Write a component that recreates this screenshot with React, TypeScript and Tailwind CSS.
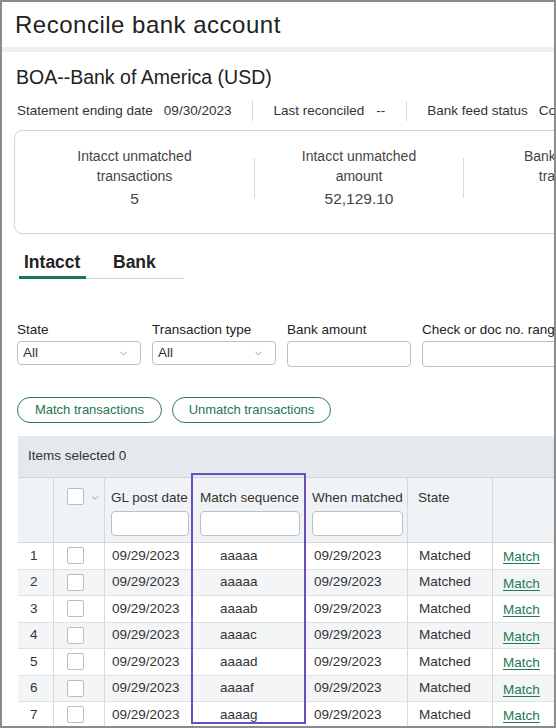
import React from "react";
import { ChevronDown } from "lucide-react";

const rows = [
  { n: 1, seq: "aaaaa" },
  { n: 2, seq: "aaaaa" },
  { n: 3, seq: "aaaab" },
  { n: 4, seq: "aaaac" },
  { n: 5, seq: "aaaad" },
  { n: 6, seq: "aaaaf" },
  { n: 7, seq: "aaaag" },
];

function Checkbox() {
  return <div className="w-[17px] h-[17px] bg-white border border-[#b7bec4] rounded-[2px] shrink-0" />;
}

function SelectBox({ label }: { label: string }) {
  return (
    <div className="w-[124px] h-[24px] border border-[#b9c1c6] rounded-[4px] bg-white flex items-center justify-between pl-[5px] pr-[11px]">
      <span>{label}</span>
      <ChevronDown size={11} strokeWidth={1.5} className="text-[#777]" />
    </div>
  );
}

export default function App() {
  return (
    <div className="w-[556px] h-[728px] border-2 border-[#8b8b8b] overflow-hidden bg-white text-[#333] font-['Liberation_Sans',Arial,sans-serif]">
      {/* page header */}
      <div className="h-[45px] flex items-center pl-[13px]">
        <h1 className="text-[24px] tracking-[0.5px] text-[#222] whitespace-nowrap">Reconcile bank account</h1>
      </div>
      <div className="h-[5px] bg-[#eaeff1]" />

      <div className="pl-[15px] pt-[13px] overflow-hidden">
        <div className="-ml-px text-[19.5px] leading-[24px] text-[#222] whitespace-nowrap">BOA--Bank of America (USD)</div>

        {/* statement info */}
        <div className="mt-[12px] h-[20px] flex items-center text-[13.5px] whitespace-nowrap">
          <span className="shrink-0">Statement ending date</span>
          <span className="shrink-0 ml-[11px]">09/30/2023</span>
          <div className="shrink-0 ml-[21px] w-px h-[20px] bg-[#d3d9dc]" />
          <span className="shrink-0 ml-[20px]">Last reconciled</span>
          <span className="shrink-0 ml-[12px]">--</span>
          <div className="shrink-0 ml-[21px] w-px h-[20px] bg-[#d3d9dc]" />
          <span className="shrink-0 ml-[20px]">Bank feed status</span>
          <span className="shrink-0 ml-[11px]">Connected</span>
        </div>

        {/* summary card */}
        <div className="-ml-[3px] mt-[9px] w-[700px] h-[104px] border border-[#cfd6da] rounded-[8px] flex text-[14px] text-[#444]">
          <div className="w-[239px] shrink-0 pt-[15px] text-center">
            <div className="leading-[20px]">Intacct unmatched<br />transactions</div>
            <div className="mt-[3px] leading-[20px] text-[15.5px]">5</div>
          </div>
          <div className="shrink-0 w-px h-[40px] mt-[27px] bg-[#d3d9dc]" />
          <div className="w-[208px] shrink-0 pt-[15px] text-center">
            <div className="leading-[20px]">Intacct unmatched<br />amount</div>
            <div className="mt-[3px] leading-[20px] text-[15.5px]">52,129.10</div>
          </div>
          <div className="shrink-0 w-px h-[40px] mt-[27px] bg-[#d3d9dc]" />
          <div className="w-[225px] shrink-0 pt-[15px] text-center">
            <div className="leading-[20px]">Bank unmatched<br />transactions</div>
            <div className="mt-[3px] leading-[20px] text-[15.5px]">3</div>
          </div>
        </div>

        {/* tabs */}
        <div className="ml-[2px] mt-[17px] w-[165px] flex border-b border-[#cfd6da] text-[17.5px] font-bold text-[#222]">
          <div className="pl-[5px] pr-[5px] w-[67px] pb-[3px] leading-[22px] border-b-[3px] border-[#17784f] -mb-px">Intacct</div>
          <div className="ml-[27px] leading-[22px]">Bank</div>
        </div>

        {/* filters */}
        <div className="mt-[43px] flex gap-[11px] text-[13.5px] whitespace-nowrap">
          <div className="w-[124px] shrink-0">
            <div className="leading-[16px] text-[#222]">State</div>
            <div className="mt-[3px]"><SelectBox label="All" /></div>
          </div>
          <div className="w-[124px] shrink-0">
            <div className="leading-[16px] text-[#222]">Transaction type</div>
            <div className="mt-[3px]"><SelectBox label="All" /></div>
          </div>
          <div className="w-[124px] shrink-0">
            <div className="leading-[16px] text-[#222]">Bank amount</div>
            <div className="mt-[3px] h-[26px] border border-[#b9c1c6] rounded-[4px] bg-white" />
          </div>
          <div className="w-[200px] shrink-0">
            <div className="leading-[16px] text-[#222]">Check or doc no. range</div>
            <div className="mt-[3px] h-[26px] border border-[#b9c1c6] rounded-[4px] bg-white" />
          </div>
        </div>

        {/* actions */}
        <div className="mt-[30px] flex gap-[10px] text-[13px] text-[#1d7650] whitespace-nowrap">
          <button className="h-[26px] w-[145px] border border-[#2b7c58] rounded-full">Match transactions</button>
          <button className="h-[26px] w-[159px] border border-[#2b7c58] rounded-full">Unmatch transactions</button>
        </div>

        {/* table */}
        <div className="relative ml-px mt-[13px] w-[700px] text-[13.5px] whitespace-nowrap">
          <div className="h-[42px] bg-[#e3e9ec] border-b border-[#d0d7db] flex items-center pl-[10px]">Items selected 0</div>
          <div className="h-[65px] flex bg-[#f0f3f5] border-b border-[#d3d9dd]">
            <div className="w-[36px] shrink-0 border-r border-[#d3d9dd]" />
            <div className="w-[51px] shrink-0 border-r border-[#d3d9dd] flex items-start pt-[10px] pl-[13px] gap-[6px]">
              <Checkbox />
              <ChevronDown size={10} strokeWidth={1.5} className="mt-[5px] text-[#666]" />
            </div>
            <div className="w-[88px] shrink-0 border-r border-[#d3d9dd] pl-[6px] pt-[11px]">
              <div className="leading-[18px]">GL post date</div>
              <div className="mt-[4px] w-[78px] h-[25px] bg-white border border-[#b9c1c6] rounded-[4px]" />
            </div>
            <div className="w-[113px] shrink-0 border-r border-[#d3d9dd] pl-[7px] pt-[11px]">
              <div className="leading-[18px]">Match sequence</div>
              <div className="mt-[4px] w-[100px] h-[25px] bg-white border border-[#b9c1c6] rounded-[4px]" />
            </div>
            <div className="w-[102px] shrink-0 border-r border-[#d3d9dd] pl-[6px] pt-[11px]">
              <div className="leading-[18px]">When matched</div>
              <div className="mt-[4px] w-[91px] h-[25px] bg-white border border-[#b9c1c6] rounded-[4px]" />
            </div>
            <div className="w-[85px] shrink-0 border-r border-[#d3d9dd] pl-[10px] pt-[11px]">
              <div className="leading-[18px]">State</div>
            </div>
            <div className="w-[120px] shrink-0 border-r border-[#d3d9dd]" />
          </div>
          {rows.map((r) => (
            <div
              key={r.n}
              className={`h-[26.5px] flex items-center border-b border-[#dde2e5] ${r.n % 2 === 0 ? "bg-[#f3f5f6]" : "bg-white"}`}
            >
              <div className="w-[36px] h-full shrink-0 border-r border-[#d3d9dd] pl-[12px] flex items-center">{r.n}</div>
              <div className="w-[51px] h-full shrink-0 border-r border-[#d3d9dd] pl-[13px] flex items-center"><Checkbox /></div>
              <div className="w-[88px] h-full shrink-0 border-r border-[#d3d9dd] pl-[7px] flex items-center">09/29/2023</div>
              <div className="w-[113px] h-full shrink-0 border-r border-[#d3d9dd] pl-[27px] flex items-center">{r.seq}</div>
              <div className="w-[102px] h-full shrink-0 border-r border-[#d3d9dd] pl-[8px] flex items-center">09/29/2023</div>
              <div className="w-[85px] h-full shrink-0 border-r border-[#d3d9dd] pl-[11px] flex items-center">Matched</div>
              <div className="w-[120px] h-full shrink-0 border-r border-[#d3d9dd] pl-[10px] pt-[3px] flex items-center">
                <a className="text-[#1d7a52] underline underline-offset-2">Match</a>
              </div>
            </div>
          ))}
          {/* highlight around the match sequence column */}
          <div className="absolute left-[173px] top-[37px] w-[115px] h-[251px] border-2 border-[#6d4bc2] pointer-events-none" />
        </div>
      </div>
    </div>
  );
}
